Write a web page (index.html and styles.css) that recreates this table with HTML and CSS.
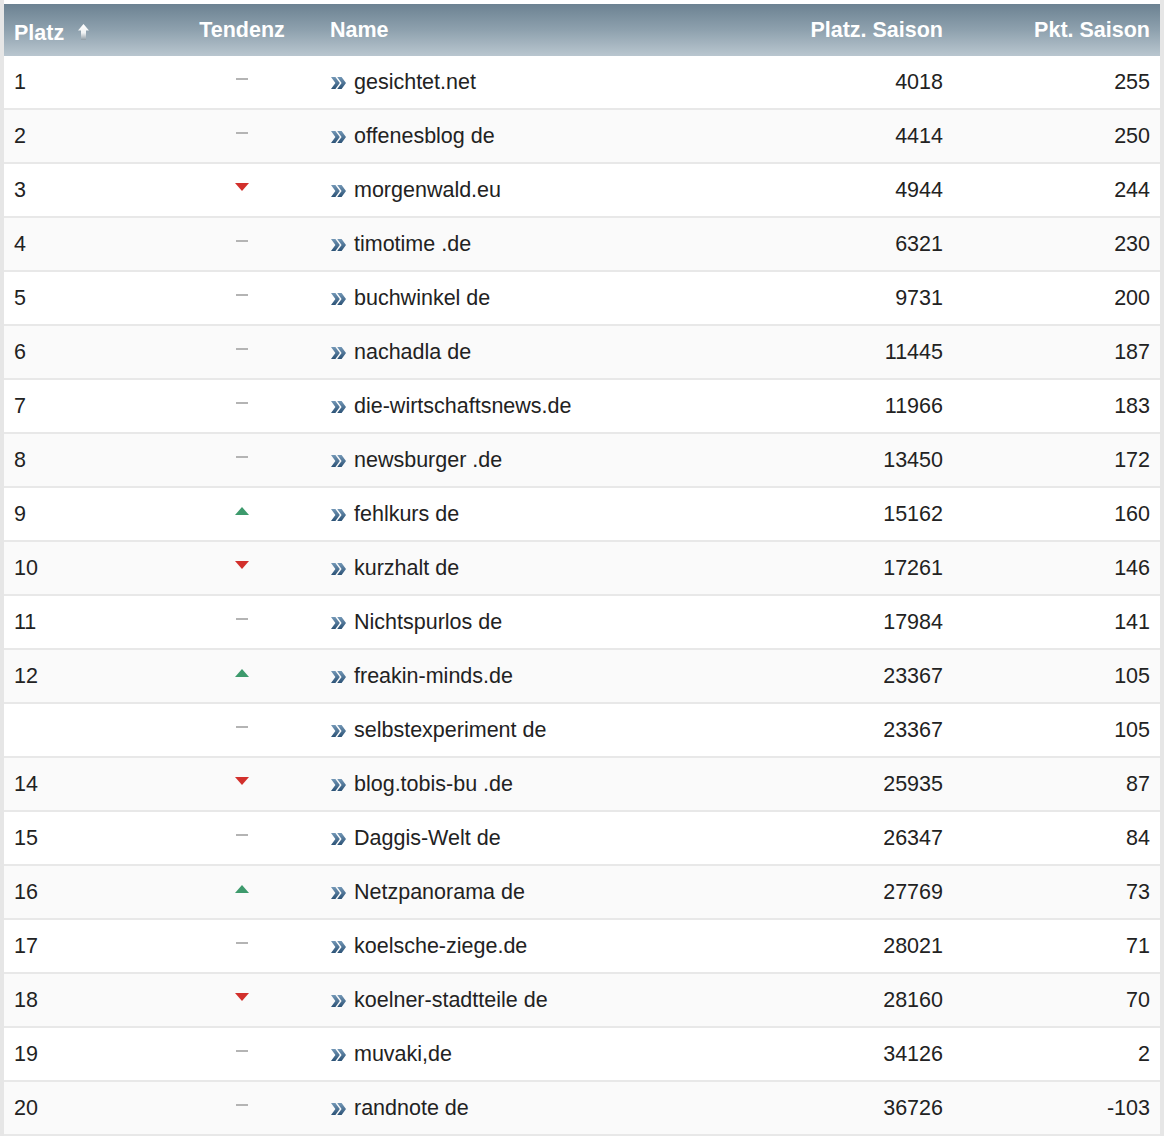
FILE: index.html
```html
<!DOCTYPE html>
<html lang="de">
<head>
<meta charset="utf-8">
<title>Rangliste</title>
<link rel="stylesheet" href="styles.css">
</head>
<body>
<div class="frame">
<table class="rank">
  <colgroup>
    <col class="c-platz"><col class="c-tend"><col class="c-name"><col class="c-ps"><col class="c-pkt">
  </colgroup>
  <thead>
    <tr>
      <th class="h-platz"><span class="h-platz-in">Platz<svg class="sort" width="13" height="18" viewBox="0 0 13 18"><defs><linearGradient id="sg" x1="0" y1="0" x2="0" y2="1"><stop offset="0" stop-color="#ffffff"/><stop offset="0.55" stop-color="#f1f3f4"/><stop offset="1" stop-color="#8e9ba4"/></linearGradient></defs><polygon points="6.5,1 12,7.5 9,7.5 9,17 4,17 4,7.5 1,7.5" fill="url(#sg)"/></svg></span></th>
      <th class="h-tend">Tendenz</th>
      <th class="h-name">Name</th>
      <th class="h-num">Platz. Saison</th>
      <th class="h-num">Pkt. Saison</th>
    </tr>
  </thead>
  <tbody id="rows"></tbody>
</table>
</div>
<svg width="0" height="0" class="defs"><defs><linearGradient id="cg" x1="0" y1="0" x2="0" y2="1"><stop offset="0" stop-color="#7397b6"/><stop offset="1" stop-color="#2b5276"/></linearGradient></defs></svg>
<script src="app.js"></script>
</body>
</html>
```

FILE: app.js
```js
const data = [
  ["1","n","gesichtet.net","4018","255"],
  ["2","n","offenesblog de","4414","250"],
  ["3","d","morgenwald.eu","4944","244"],
  ["4","n","timotime .de","6321","230"],
  ["5","n","buchwinkel de","9731","200"],
  ["6","n","nachadla de","11445","187"],
  ["7","n","die-wirtschaftsnews.de","11966","183"],
  ["8","n","newsburger .de","13450","172"],
  ["9","u","fehlkurs de","15162","160"],
  ["10","d","kurzhalt de","17261","146"],
  ["11","n","Nichtspurlos de","17984","141"],
  ["12","u","freakin-minds.de","23367","105"],
  ["","n","selbstexperiment de","23367","105"],
  ["14","d","blog.tobis-bu .de","25935","87"],
  ["15","n","Daggis-Welt de","26347","84"],
  ["16","u","Netzpanorama de","27769","73"],
  ["17","n","koelsche-ziege.de","28021","71"],
  ["18","d","koelner-stadtteile de","28160","70"],
  ["19","n","muvaki,de","34126","2"],
  ["20","n","randnote de","36726","-103"]
];
const chev = '<svg class="chev" width="15" height="14" viewBox="0 0 15 14"><polygon points="0,1 4.4,1 8.8,7 4.4,13 0,13 4.4,7" fill="url(#cg)"/><polygon points="6.2,1 10.6,1 15,7 10.6,13 6.2,13 10.6,7" fill="url(#cg)"/></svg>';
const tb = document.getElementById("rows");
let html = "";
for (const r of data) {
  const t = r[1] === "n" ? '<span class="t-none"></span>' : r[1] === "d" ? '<span class="t-down"></span>' : '<span class="t-up"></span>';
  html += '<tr><td class="d-platz">' + r[0] + '</td><td class="d-tend">' + t + '</td><td class="d-name">' + chev + r[2] + '</td><td class="d-num">' + r[3] + '</td><td class="d-num">' + r[4] + '</td></tr>';
}
tb.innerHTML = html;
```

FILE: styles.css
```css
html, body {
  margin: 0;
  padding: 0;
  background: #ffffff;
}
body {
  font-family: "Liberation Sans", Arial, Helvetica, sans-serif;
  color: #222222;
}
.defs { position: absolute; width: 0; height: 0; }
.frame {
  width: 1156px;
  padding-top: 4px;
  border-left: 4px solid #e6e6e6;
  border-right: 4px solid #e6e6e6;
}
.rank {
  width: 1156px;
  border-collapse: collapse;
  table-layout: fixed;
}
.c-platz { width: 180px; }
.c-tend { width: 116px; }
.c-name { width: 453px; }
.c-ps { width: 200px; }
.c-pkt { width: 207px; }

.rank thead tr {
  background: linear-gradient(to bottom, #6c8292 0%, #8ea1ae 50%, #b9c6cf 100%);
}
.rank th {
  height: 52px;
  padding: 0 10px;
  box-sizing: border-box;
  color: #ffffff;
  font-size: 21.5px;
  font-weight: bold;
  white-space: nowrap;
  vertical-align: middle;
}
.h-platz { text-align: left; }
.h-platz-in {
  display: inline-flex;
  align-items: center;
  gap: 13px;
  padding-top: 7px;
}
.sort { display: block; margin-top: -4px; }
.h-tend { text-align: center; }
.h-name { text-align: left; padding-left: 30px !important; }
.h-num { text-align: right; }

.rank td {
  height: 51px;
  padding: 1px 10px 0 10px;
  box-sizing: content-box;
  border-bottom: 2px solid #e8e8e8;
  font-size: 21.5px;
  white-space: nowrap;
  vertical-align: middle;
}
.rank tbody tr:nth-child(odd) { background: #ffffff; }
.rank tbody tr:nth-child(even) { background: #fafafa; }
.d-platz { text-align: left; }
.d-tend { text-align: center; }
.rank td.d-name { text-align: left; padding-left: 31px; }
.d-num { text-align: right; }

.chev {
  display: inline-block;
  vertical-align: -1px;
  margin-right: 8px;
}

.t-none, .t-down, .t-up {
  display: inline-block;
  vertical-align: middle;
  position: relative;
  top: -4px;
}
.t-none {
  width: 12px;
  height: 2px;
  background: #b4b4b4;
}
.t-down {
  width: 0;
  height: 0;
  border-left: 7px solid transparent;
  border-right: 7px solid transparent;
  border-top: 8px solid #d2302c;
}
.t-up {
  width: 0;
  height: 0;
  border-left: 7px solid transparent;
  border-right: 7px solid transparent;
  border-bottom: 8px solid #3d9a6c;
}
```
